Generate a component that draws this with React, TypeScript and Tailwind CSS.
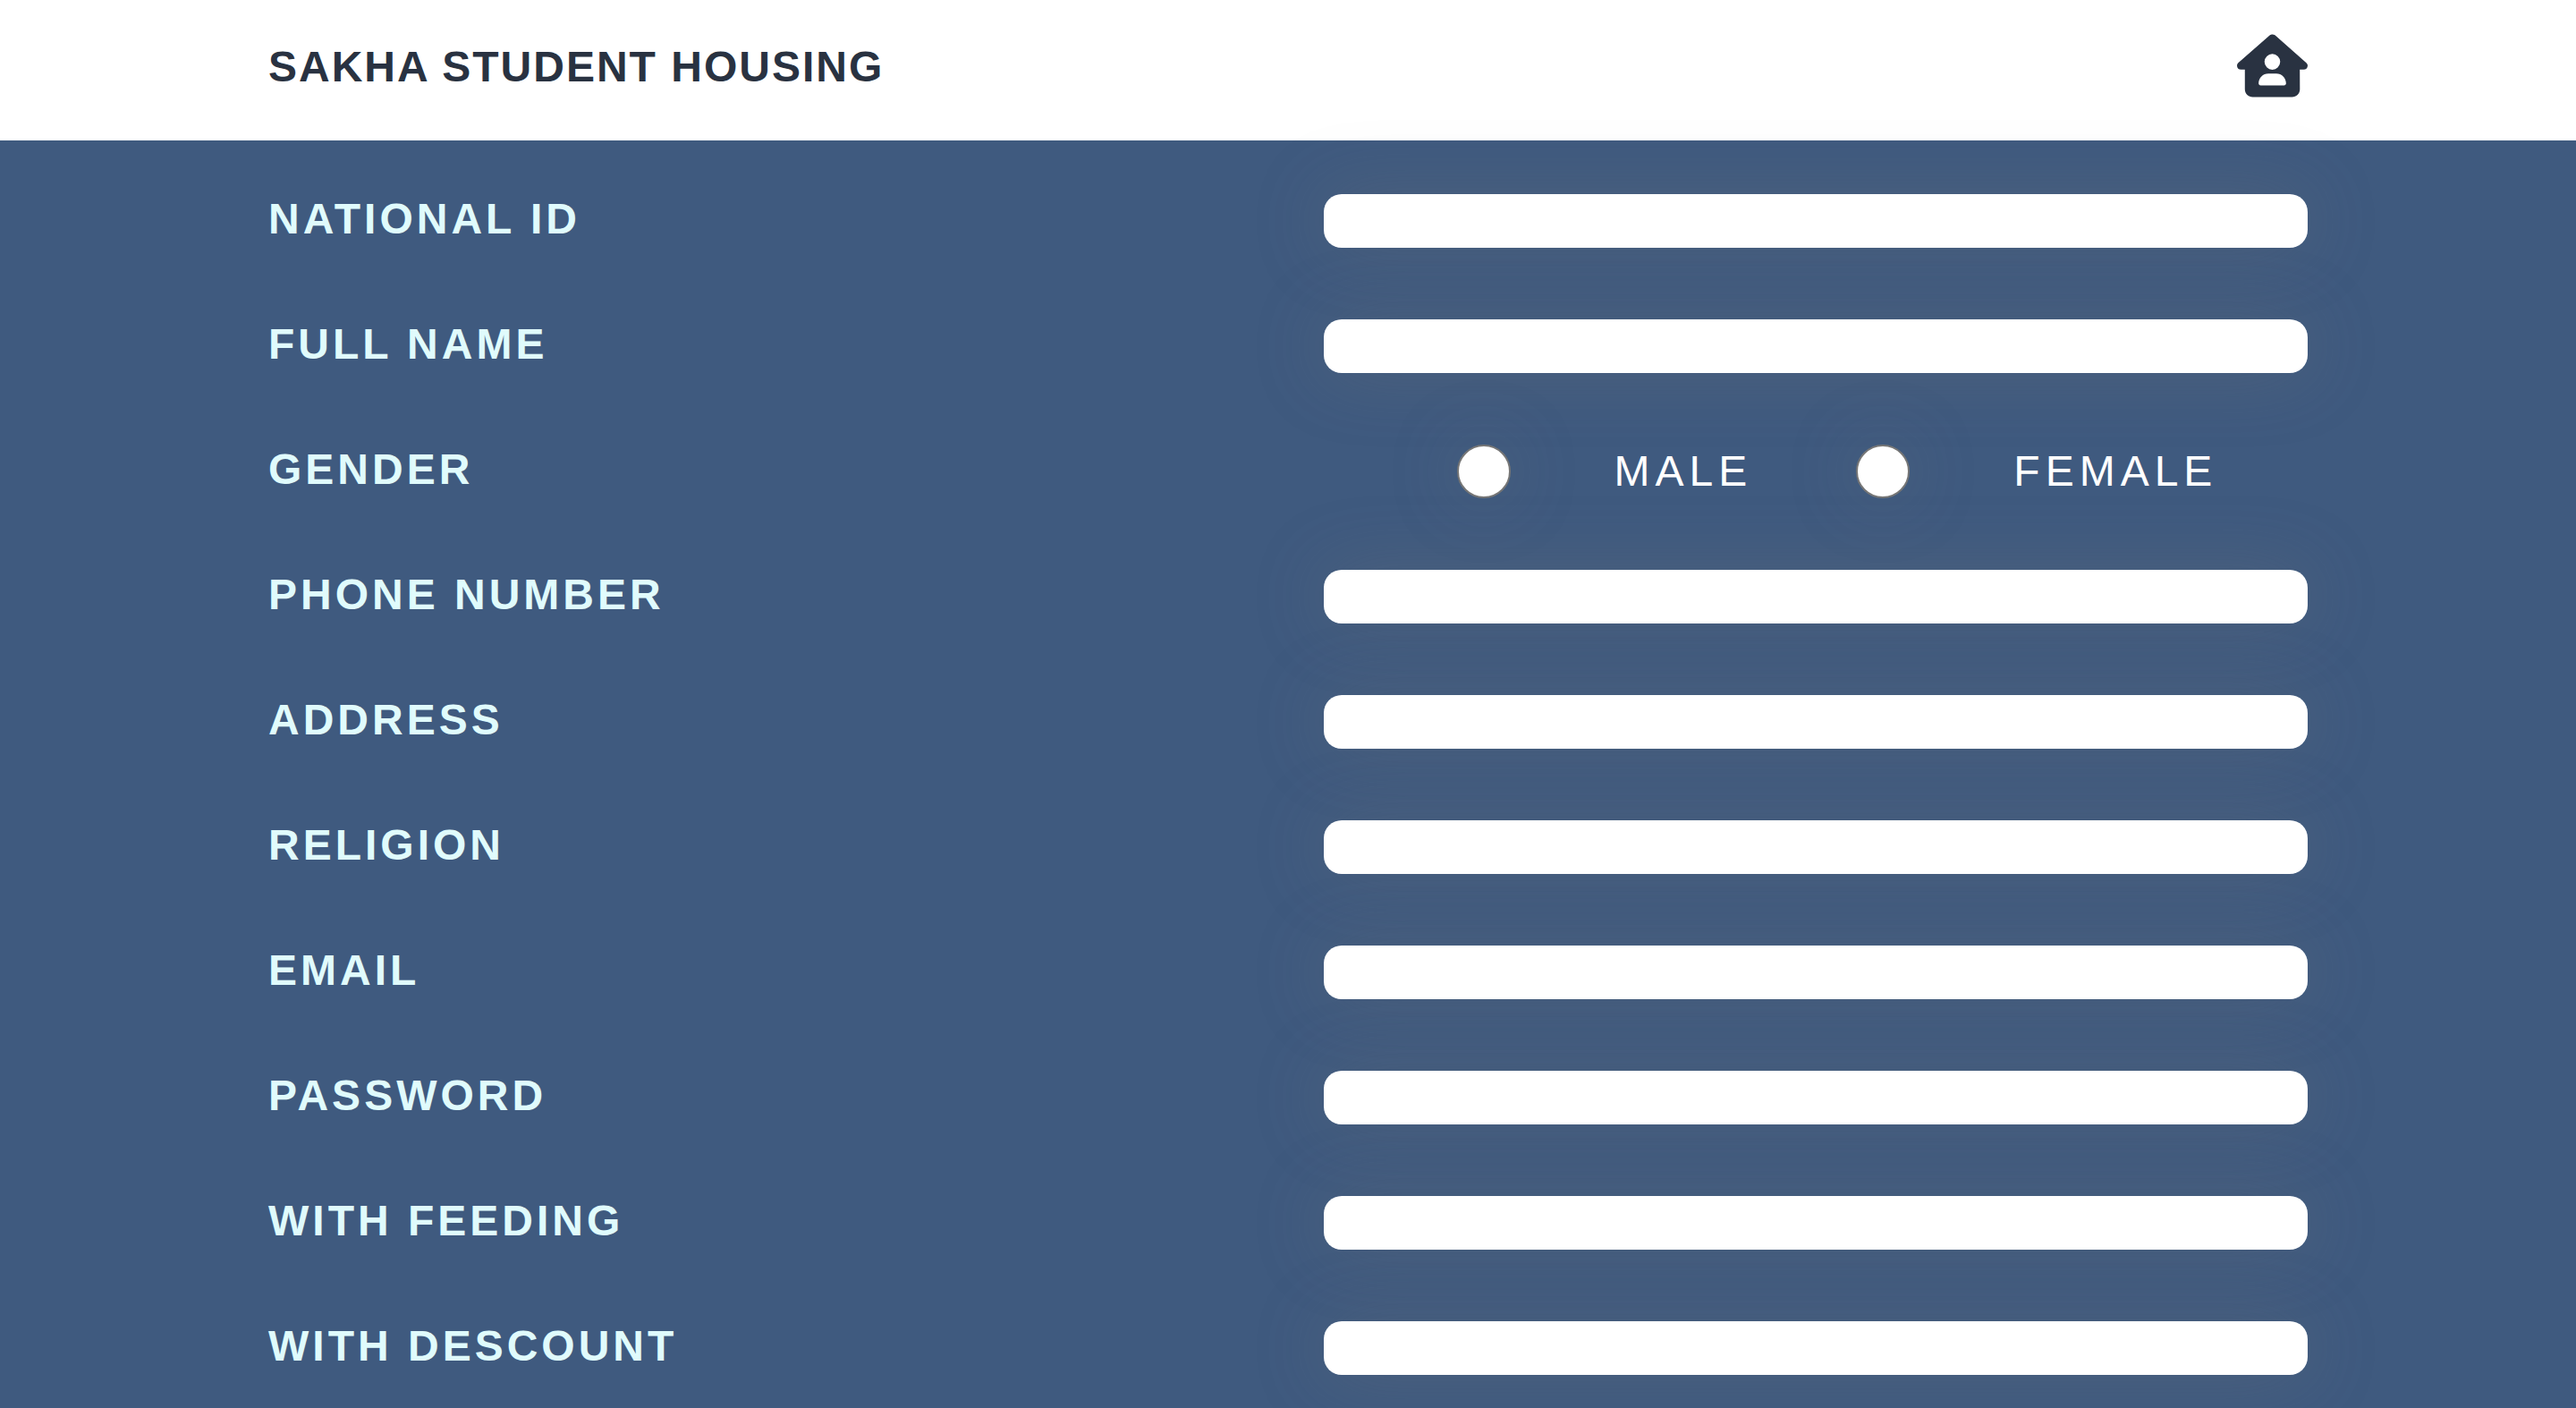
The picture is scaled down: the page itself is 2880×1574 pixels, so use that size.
import { FaHouseUser } from "react-icons/fa6";

type Field = { id: string; label: string; type: string };

const identityFields: Field[] = [
  { id: "national-id", label: "NATIONAL ID", type: "text" },
  { id: "full-name", label: "FULL NAME", type: "text" },
];

const detailFields: Field[] = [
  { id: "phone", label: "PHONE NUMBER", type: "tel" },
  { id: "address", label: "ADDRESS", type: "text" },
  { id: "religion", label: "RELIGION", type: "text" },
  { id: "email", label: "EMAIL", type: "email" },
  { id: "password", label: "PASSWORD", type: "password" },
  { id: "feeding", label: "WITH FEEDING", type: "text" },
  { id: "discount", label: "WITH DESCOUNT", type: "text" },
];

const genders = [
  { id: "male", label: "MALE" },
  { id: "female", label: "FEMALE" },
];

function FieldRow({ id, label, type }: Field) {
  return (
    <div className="grid grid-cols-2 items-start gap-20">
      <label htmlFor={id} className="text-5xl leading-14 font-bold tracking-[4px] text-[#e0fbfc]">
        {label}
      </label>
      <input
        id={id}
        name={id}
        type={type}
        className="h-15 w-full rounded-[20px] bg-white px-5 text-3xl text-[#293241] shadow-[0_0_80px_rgba(119,119,119,0.28)] outline-none"
      />
    </div>
  );
}

function GenderRow() {
  return (
    <div role="radiogroup" aria-labelledby="gender-label" className="grid grid-cols-2 items-start gap-20">
      <span id="gender-label" className="text-5xl leading-14 font-bold tracking-[4px] text-[#e0fbfc]">
        GENDER
      </span>
      <div className="flex justify-center gap-24 pl-7">
        {genders.map((g) => (
          <div key={g.id} className="flex items-center gap-24">
            <input
              id={g.id}
              name="gender"
              type="radio"
              value={g.id}
              className="mx-5 size-15 appearance-none rounded-full border-2 border-[#767676] bg-white shadow-[0_0_80px_rgba(119,119,119,0.28)] checked:border-[16px] checked:border-[#293241]"
            />
            <label htmlFor={g.id} className="text-5xl leading-15 font-medium tracking-[6px] text-white">
              {g.label}
            </label>
          </div>
        ))}
      </div>
    </div>
  );
}

export default function App() {
  return (
    <div className="min-h-screen bg-[#3f5a7f] font-['Liberation_Sans',Arial,sans-serif]">
      <header className="bg-white pt-[38px] pb-12">
        <div className="mx-auto flex w-full max-w-[2280px] items-end justify-between">
          <h1 className="text-5xl leading-17 font-bold tracking-[2px] text-[#293241]">
            SAKHA STUDENT HOUSING
          </h1>
          <a href="#home" aria-label="Home" className="text-[#293241]">
            <FaHouseUser className="h-[71px] w-[79px]" />
          </a>
        </div>
      </header>
      <main>
        <form className="mx-auto flex w-full max-w-[2280px] flex-col gap-20 pt-15 pb-9">
          {identityFields.map((f) => (
            <FieldRow key={f.id} {...f} />
          ))}
          <GenderRow />
          {detailFields.map((f) => (
            <FieldRow key={f.id} {...f} />
          ))}
        </form>
      </main>
    </div>
  );
}
